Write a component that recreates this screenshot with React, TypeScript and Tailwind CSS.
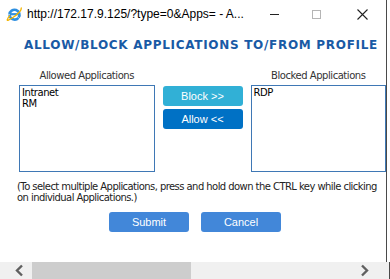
import React from "react";

const tahoma = { fontFamily: "'DejaVu Sans', Tahoma, sans-serif", letterSpacing: "-0.45px" };
const arial = { fontFamily: "'Liberation Sans', Arial, sans-serif" };

function IEIcon() {
  return (
    <svg width="17" height="17" viewBox="0 0 17 17">
      <path d="M3.5 8.5 A5 5 0 1 1 12.6 11.6" fill="none" stroke="#2e8fe0" strokeWidth="2.6" />
      <path d="M4 8.2 H13" stroke="#2e8fe0" strokeWidth="2.2" />
      <path d="M3.6 9 A5 5 0 0 0 12.4 11.8" fill="none" stroke="#2e8fe0" strokeWidth="2.6" />
      <path d="M14.8 1.6 C17 3.2 11 9 6.5 11.8 C3 14 1 15 1.2 13.8 C1.4 12.6 3 10.6 4.2 9.6" fill="none" stroke="#f2b400" strokeWidth="1.3" />
    </svg>
  );
}

export default function App() {
  return (
    <div className="w-[390px] h-[279px] bg-white overflow-hidden flex flex-col relative">
      <div className="flex-1 flex flex-col w-[387px] border-r border-[#4a4a4a] min-h-0">
        {/* title bar */}
        <div className="h-[30px] flex items-center shrink-0">
          <div className="ml-[6px] mt-[-2px]"><IEIcon /></div>
          <div className="ml-[4px] text-[12px] text-black leading-none mt-[-2px] whitespace-nowrap" style={arial}>
            http://172.17.9.125/?type=0&amp;Apps= - A...
          </div>
          <div className="flex-1" />
          <div className="w-[9px] h-[1px] bg-[#222] mr-[33px] mt-[-2px]" />
          <div className="w-[9px] h-[9px] border border-[#b5b5b5] mr-[36px] mt-[-2px]" />
          <svg width="11" height="11" viewBox="0 0 11 11" className="mr-[18px] mt-[-2px]">
            <path d="M0.5 0.5 L10.5 10.5 M10.5 0.5 L0.5 10.5" stroke="#222" strokeWidth="1.1" />
          </svg>
        </div>
        {/* heading */}
        <div className="h-[27px] shrink-0 pl-[24px] flex items-start pt-[9px]">
          <div className="text-[12px] font-bold text-[#195aa5] leading-none tracking-[0.7px] whitespace-nowrap" style={{ fontFamily: "'DejaVu Sans', Verdana, sans-serif" }}>
            ALLOW/BLOCK APPLICATIONS TO/FROM PROFILE
          </div>
        </div>
        {/* lists */}
        <div className="flex pl-[19px] pt-[13px] shrink-0">
          <div className="flex flex-col w-[136px]">
            <div className="text-[10px] text-[#333] text-center leading-[12px] whitespace-nowrap" style={tahoma}>Allowed Applications</div>
            <div className="mt-[3px] h-[87px] border border-[#3f78b5] px-[2px] pt-[1px] text-[10px] text-black leading-[11px]" style={tahoma}>
              <div>Intranet</div>
              <div>RM</div>
            </div>
          </div>
          <div className="flex flex-col ml-[8px] pt-[16px] gap-[3px]">
            <div className="w-[80px] h-[20px] rounded-[3px] bg-[#31b0d6] text-white text-[11px] flex items-center justify-center" style={arial}>Block &gt;&gt;</div>
            <div className="w-[80px] h-[20px] rounded-[3px] bg-[#0071c5] text-white text-[11px] flex items-center justify-center" style={arial}>Allow &lt;&lt;</div>
          </div>
          <div className="flex flex-col w-[136px] ml-[8px]">
            <div className="text-[10px] text-[#333] text-center leading-[12px] whitespace-nowrap" style={tahoma}>Blocked Applications</div>
            <div className="mt-[3px] h-[87px] border border-[#3f78b5] px-[2px] pt-[1px] text-[10px] text-black leading-[11px]" style={tahoma}>
              <div>RDP</div>
            </div>
          </div>
        </div>
        <div className="pl-[17px] pt-[9px] text-[10px] text-[#222] leading-[11px] whitespace-nowrap" style={{ ...tahoma, letterSpacing: "-0.56px" }}>
          (To select multiple Applications, press and hold down the CTRL key while clicking<br />on individual Applications.)
        </div>
        <div className="flex pl-[109px] gap-[12px] pt-[9px]">
          <div className="w-[80px] h-[20px] rounded-[3px] bg-[#4287d9] text-white text-[11px] flex items-center justify-center" style={arial}>Submit</div>
          <div className="w-[80px] h-[20px] rounded-[3px] bg-[#4287d9] text-white text-[11px] flex items-center justify-center" style={arial}>Cancel</div>
        </div>
      </div>
      {/* horizontal scrollbar */}
      <div className="h-[17px] shrink-0 bg-[#f0f0f0] flex items-center w-[390px] border-r border-[#4a4a4a]">
        <svg width="32" height="17" viewBox="0 0 32 17" className="shrink-0">
          <path d="M22 3.5 L17 8.5 L22 13.5" fill="none" stroke="#606060" strokeWidth="2.4" />
        </svg>
        <div className="w-[159px] h-[17px] bg-[#cdcdcd] shrink-0" />
        <div className="flex-1" />
        <svg width="32" height="17" viewBox="0 0 32 17" className="shrink-0">
          <path d="M5 3.5 L10 8.5 L5 13.5" fill="none" stroke="#606060" strokeWidth="2.4" />
        </svg>
      </div>
    </div>
  );
}
